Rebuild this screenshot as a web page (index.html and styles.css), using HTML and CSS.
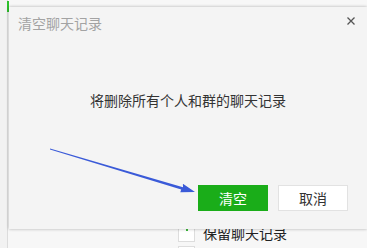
FILE: index.html
```html
<!DOCTYPE html>
<html lang="zh-CN">
<head>
  <meta charset="UTF-8">
  <meta name="viewport" content="width=device-width, initial-scale=1.0">
  <title>清空聊天记录</title>
  <link rel="stylesheet" href="styles.css">
</head>
<body>

  <div class="app">
    <div class="rail"><span class="rail-mark"></span></div>
    <div class="main">
      <div class="settings">
        <div class="setting-row">
          <span class="checkbox"><span class="tick"></span></span>
          <span class="setting-label">保留聊天记录</span>
        </div>
        <div class="setting-row">
          <span class="checkbox"></span>
          <span class="setting-label">&nbsp;</span>
        </div>
      </div>
    </div>
  </div>

  <div class="dialog">
    <div class="dialog-header">
      <span class="dialog-title">清空聊天记录</span>
      <svg class="dialog-close" width="8" height="8" viewBox="0 0 8 8">
        <path d="M0.5 0.5 L7.5 7.5 M7.5 0.5 L0.5 7.5" stroke="#555" stroke-width="1.3" fill="none"/>
      </svg>
    </div>
    <p class="dialog-message">将删除所有个人和群的聊天记录</p>
    <div class="dialog-footer">
      <button class="btn btn-primary">清空</button>
      <button class="btn btn-default">取消</button>
    </div>
  </div>

  <!-- annotation arrow pointing at the confirm button -->
  <svg class="arrow" width="367" height="248" viewBox="0 0 367 248">
    <polygon points="50,148.6 183,187.2 182.9,183.7 195,192 180.3,192.3 181.2,189.6 50,149.6" fill="#3a5ad8"/>
  </svg>

</body>
</html>
```

FILE: styles.css
```css
html {
  overflow: hidden;
}

body {
  margin: 0;
  width: 367px;
  height: 248px;
  overflow: hidden;
  background-color: #f7f7f7;
  font-family: 'Noto Sans CJK SC', 'Noto Sans', sans-serif;
  font-size: 14px;
  position: relative;
}

.app {
  display: flex;
  height: 248px;
}

.rail {
  width: 8px;
  border-right: 1px solid #dcdcdc;
  box-sizing: border-box;
  position: relative;
  background-color: #f2f2f2;
}

.rail-mark {
  position: absolute;
  left: 7px;
  top: 1px;
  width: 2px;
  height: 11px;
  background-color: #2dc12b;
}

.main {
  flex: 1;
  padding: 225px 0 0 170px;
  overflow: hidden;
}

.settings {
  display: flex;
  flex-direction: column;
  gap: 4px;
}

.setting-row {
  display: flex;
  align-items: center;
  gap: 8px;
  height: 17px;
}

.checkbox {
  width: 17px;
  height: 17px;
  box-sizing: border-box;
  border: 1px solid #dddddd;
  background-color: #ffffff;
  position: relative;
}

.tick {
  position: absolute;
  left: 7px;
  top: 3px;
  width: 2px;
  height: 2px;
  background-color: #3cb83a;
}

.setting-label {
  color: #222;
  line-height: 17px;
}

.dialog {
  position: absolute;
  left: 9px;
  top: 7px;
  width: 358px;
  height: 222px;
  box-sizing: border-box;
  padding: 6px 19px 18px 9px;
  background-color: #f4f4f4;
  box-shadow: 0 0 3px rgba(0, 0, 0, 0.3);
  display: flex;
  flex-direction: column;
}

.dialog-header {
  display: flex;
  justify-content: space-between;
  align-items: center;
  line-height: 20px;
}

.dialog-title {
  color: #a3a3a3;
}

.dialog-close {
  margin-right: -7px;
  margin-top: -5px;
}

.dialog-message {
  margin: 57px 0 0 10px;
  text-align: center;
  line-height: 20px;
  color: #333;
}

.dialog-footer {
  margin-top: auto;
  display: flex;
  justify-content: flex-end;
  gap: 10px;
}

.btn {
  width: 70px;
  height: 26px;
  box-sizing: border-box;
  font-family: inherit;
  font-size: 14px;
  padding: 0;
  cursor: pointer;
}

.btn-primary {
  background-color: #1aad19;
  color: #ffffff;
  border: none;
}

.btn-default {
  background-color: #ffffff;
  color: #333;
  border: 1px solid #e2e2e2;
}

.arrow {
  position: absolute;
  left: 0;
  top: 0;
}
```
